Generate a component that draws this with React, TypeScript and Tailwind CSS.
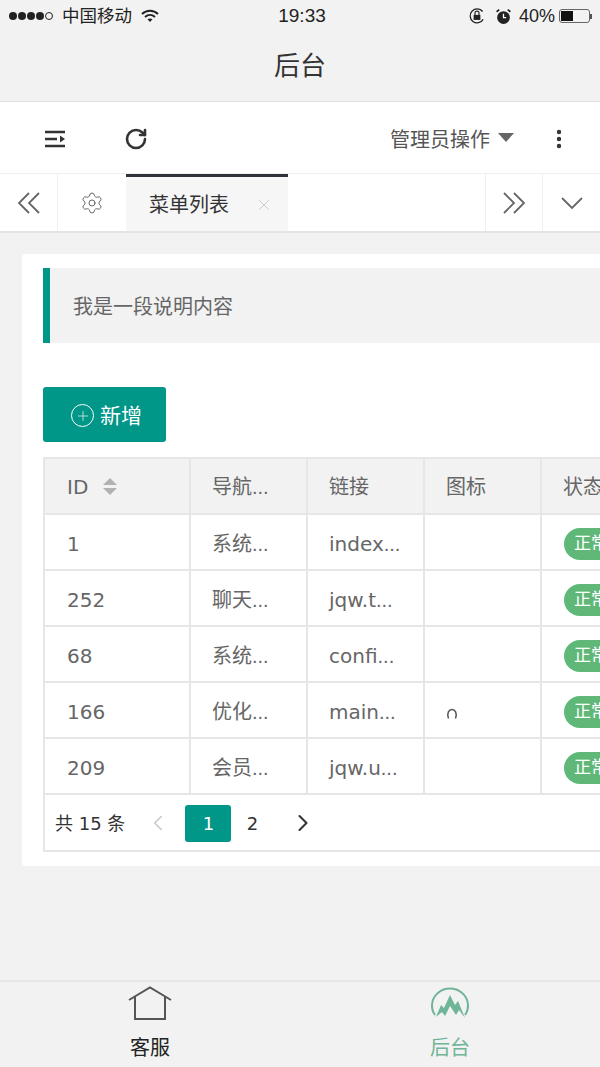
import React from "react";
import { ChevronLeft, ChevronRight, RotateCw, Settings, X, Plus, EllipsisVertical } from "lucide-react";

const sans = "font-['Liberation_Sans','Noto_Sans_CJK_SC',sans-serif]";
const rows = [
  ["1", "系统", "index", ""],
  ["252", "聊天", "jqw.t", ""],
  ["68", "系统", "confi", ""],
  ["166", "优化", "main", "o"],
  ["209", "会员", "jqw.u", ""],
];
const cell = "shrink-0 flex items-center pl-[21px] border-r-2 border-[#e6e6e6] overflow-hidden whitespace-nowrap";

function Dots({ t }: { t: string }) {
  return (
    <span>
      {t}
      <span className={sans}>...</span>
    </span>
  );
}

function Row({ r }: { r: string[] }) {
  return (
    <div className="flex h-[56px] border-b-2 border-[#e6e6e6] text-[20px] text-[#666]">
      <div className={`${cell} w-[146px] pl-[22px] pt-[3px]`}>{r[0]}</div>
      <div className={`${cell} w-[117px] pt-[3px]`}><Dots t={r[1]} /></div>
      <div className={`${cell} w-[117px] pt-[3px]`}><Dots t={r[2]} /></div>
      <div className={`${cell} w-[117px] pt-[3px]`}>
        {r[3] && (
          <svg width="12" height="12" viewBox="0 0 12 12" className="mt-1">
            <path d="M2.5 10.5 C0.5 5 3 1.5 6 1.5 C9 1.5 11.5 5 9.5 10.5" fill="none" stroke="#555" strokeWidth="1.5" />
          </svg>
        )}
      </div>
      <div className="flex items-center pl-[22px] pt-[3px]">
        <span className="flex h-[32px] w-[60px] shrink-0 items-center rounded-full bg-[#5fb878] pl-[10px] text-[17px] text-white">正常</span>
      </div>
    </div>
  );
}

export default function App() {
  return (
    <div className={`${sans} relative flex h-[1067px] w-[600px] flex-col overflow-hidden bg-[#f2f2f2] text-[#333]`}>
      <div className="flex h-[32px] shrink-0 items-center pl-[9px] pr-[8px] text-[17px] text-[#222]">
        <div className="flex items-center gap-[1px]">
          {[0, 1, 2, 3].map((i) => <span key={i} className="h-[8px] w-[8px] rounded-full bg-[#222]" />)}
          <span className="h-[8px] w-[8px] rounded-full border border-[#222]" />
        </div>
        <span className="ml-[9px] text-[17.5px]">中国移动</span>
        <svg width="18" height="14" viewBox="0 0 18 14" className="ml-[9px]">
          <path d="M1 5 C5.5 0.5 12.5 0.5 17 5" fill="none" stroke="#222" strokeWidth="2" />
          <path d="M4 8 C7 5.2 11 5.2 14 8" fill="none" stroke="#222" strokeWidth="2" />
          <path d="M6.5 10.3 L9 13 L11.5 10.3 C10 9.2 8 9.2 6.5 10.3 Z" fill="#222" />
        </svg>
        <span className="ml-[118px] w-[50px] text-center text-[19px]">19:33</span>
        <div className="ml-auto flex items-center">
          <svg width="18" height="18" viewBox="0 0 16 16">
            <path d="M13 4 A6.2 6.2 0 1 0 13.5 11" fill="none" stroke="#222" strokeWidth="1.1" />
            <rect x="5" y="7" width="6" height="4.5" fill="#222" />
            <path d="M6.2 7 V5.5 A1.8 1.8 0 0 1 9.8 5.5 V7" fill="none" stroke="#222" />
          </svg>
          <svg width="17" height="17" viewBox="0 0 16 16" className="ml-[9px]">
            <circle cx="8" cy="9" r="6" fill="#222" />
            <path d="M8 5.5 V9 H10.5" stroke="#fff" strokeWidth="1.2" fill="none" />
            <path d="M1.5 3.5 L4 1.5 M14.5 3.5 L12 1.5" stroke="#222" strokeWidth="1.6" />
          </svg>
          <span className="ml-[7px] text-[18px]">40%</span>
          <div className="ml-[4px] flex h-[14px] w-[31px] rounded-[3px] border border-[#666] p-[1px]">
            <div className="h-full w-[12px] bg-[#111]" />
          </div>
          <div className="h-[5px] w-[2px] bg-[#555]" />
        </div>
      </div>

      <div className="flex h-[70px] shrink-0 items-center justify-center border-b border-[#e2e2e2] text-[26px] text-[#333]">后台</div>

      <div className="flex h-[72px] shrink-0 items-center border-b border-[#f0f0f0] bg-white pl-[44px] pr-[29px] pt-[3px]">
        <svg width="22" height="18" viewBox="0 0 22 18">
          <path d="M1 2 H21 M1 9 H13 M1 16 H21" stroke="#333" strokeWidth="2.4" />
          <path d="M16 5.5 L21 9 L16 12.5 Z" fill="#333" />
        </svg>
        <RotateCw size={24} strokeWidth={2.6} className="ml-[58px] text-[#333]" />
        <span className="ml-auto mt-[1px] text-[20px] text-[#555]">管理员操作</span>
        <span className="ml-[8px] mb-[3px] h-0 w-0 border-x-[8px] border-t-[9px] border-x-transparent border-t-[#666]" />
        <EllipsisVertical size={24} strokeWidth={2.4} className="ml-[33px] text-[#333]" />
      </div>

      <div className="flex h-[59px] shrink-0 border-b-2 border-[#e4e4e4] bg-white">
        <div className="flex w-[58px] items-center justify-center border-r border-[#f0f0f0]">
          <svg width="24" height="24" viewBox="0 0 24 24" className="text-[#666]">
            <path d="M12 2 L2 12 L12 22 M22 2 L12 12 L22 22" fill="none" stroke="currentColor" strokeWidth="1.8" />
          </svg>
        </div>
        <div className="flex w-[68px] items-center justify-center">
          <Settings size={24} strokeWidth={0.9} className="text-[#555]" />
        </div>
        <div className="flex w-[162px] items-center border-t-[3px] border-[#2f3238] bg-[#f6f6f6] pl-[23px] pt-[1px] text-[20px] text-[#333]">
          菜单列表
          <X size={18} strokeWidth={1.1} className="ml-[26px] text-[#c2c2c2]" />
        </div>
        <div className="ml-auto flex w-[58px] items-center justify-center border-x border-[#f0f0f0]">
          <svg width="24" height="24" viewBox="0 0 24 24" className="text-[#666]">
            <path d="M2 2 L12 12 L2 22 M12 2 L22 12 L12 22" fill="none" stroke="currentColor" strokeWidth="1.8" />
          </svg>
        </div>
        <div className="flex w-[57px] items-center justify-center">
          <svg width="24" height="16" viewBox="0 0 24 16" className="text-[#666]">
            <path d="M2 3 L12 13 L22 3" fill="none" stroke="currentColor" strokeWidth="1.8" />
          </svg>
        </div>
      </div>

      <div className="ml-[22px] mt-[21px] h-[612px] w-[578px] shrink-0 overflow-hidden rounded-l-[3px] bg-white pl-[21px] pt-[14px] font-['DejaVu_Sans','Noto_Sans_CJK_SC',sans-serif]">
        <div className={`${sans} flex h-[75px] items-center border-l-[7px] border-[#009688] bg-[#f2f2f2] pl-[23px] pt-[3px] text-[20px] text-[#666]`}>我是一段说明内容</div>

        <div className={`${sans} mt-[44px] flex h-[55px] w-[123px] items-center rounded-[3px] bg-[#009688] pl-[28px] pt-[2px] text-[21px] text-white`}>
          <span className="flex h-[23px] w-[23px] items-center justify-center rounded-full border border-white">
            <Plus size={16} strokeWidth={1} />
          </span>
          <span className="ml-[6px]">新增</span>
        </div>

        <div className="mt-[15px] w-[580px] border-l-2 border-t-2 border-[#e6e6e6]">
          <div className="flex h-[56px] border-b-2 border-[#e6e6e6] bg-[#f2f2f2] text-[20px] text-[#666]">
            <div className={`${cell} w-[146px] pl-[22px] pt-[1px]`}>
              ID
              <span className="ml-[15px] flex flex-col gap-[3px]">
                <span className="h-0 w-0 border-x-[7px] border-b-[7px] border-x-transparent border-b-[#b2b2b2]" />
                <span className="h-0 w-0 border-x-[7px] border-t-[7px] border-x-transparent border-t-[#b2b2b2]" />
              </span>
            </div>
            <div className={`${cell} w-[117px] pt-[1px]`}><Dots t="导航" /></div>
            <div className={`${cell} w-[117px] pt-[1px]`}>链接</div>
            <div className={`${cell} w-[117px] pt-[1px]`}>图标</div>
            <div className="flex items-center whitespace-nowrap pl-[21px] pt-[1px]">状态</div>
          </div>
          {rows.map((r) => <Row key={r[0]} r={r} />)}
          <div className="flex h-[57px] items-center border-b-2 border-[#e6e6e6] pl-[10px] pt-[1px] text-[18px] text-[#333]">
            <span className="mt-[1px]">共 15 条</span>
            <ChevronLeft size={26} strokeWidth={1.4} className="ml-[20px] text-[#c8c8c8]" />
            <span className="ml-[14px] flex h-[37px] w-[46px] items-center justify-center rounded-[3px] bg-[#009688] pt-[1px] text-white">1</span>
            <span className="flex w-[42px] justify-center pt-[1px]">2</span>
            <ChevronRight size={28} strokeWidth={1.8} className="ml-[16px] text-[#333]" />
          </div>
        </div>
      </div>

      <div className="mt-auto flex h-[87px] shrink-0 border-t-2 border-[#e6e6e6]">
        <div className="flex w-[300px] flex-col items-center pt-[4px] text-[20px] text-[#222]">
          <svg width="44" height="35" viewBox="0 0 44 35">
            <path d="M1 14 L22 1.5 L43 14" fill="none" stroke="#555" strokeWidth="2" />
            <path d="M7 11 V33 H37 V11" fill="none" stroke="#555" strokeWidth="2" />
          </svg>
          <span className="mt-[12px]">客服</span>
        </div>
        <div className="flex w-[300px] flex-col items-center pt-[4px] text-[20px] text-[#6fb597]">
          <svg width="40" height="35" viewBox="0 0 40 35">
            <path d="M5 29 A18 17 0 1 1 35 29" fill="none" stroke="#6fb597" strokeWidth="2" />
            <path d="M6 31 L11 19 L14 22 L20 9 L25 19 L28 15 L35 32 L29 24 L26 29 L20 20 L15 30 L12 26 Z" fill="#6fb597" />
          </svg>
          <span className="mt-[12px]">后台</span>
        </div>
      </div>
    </div>
  );
}
